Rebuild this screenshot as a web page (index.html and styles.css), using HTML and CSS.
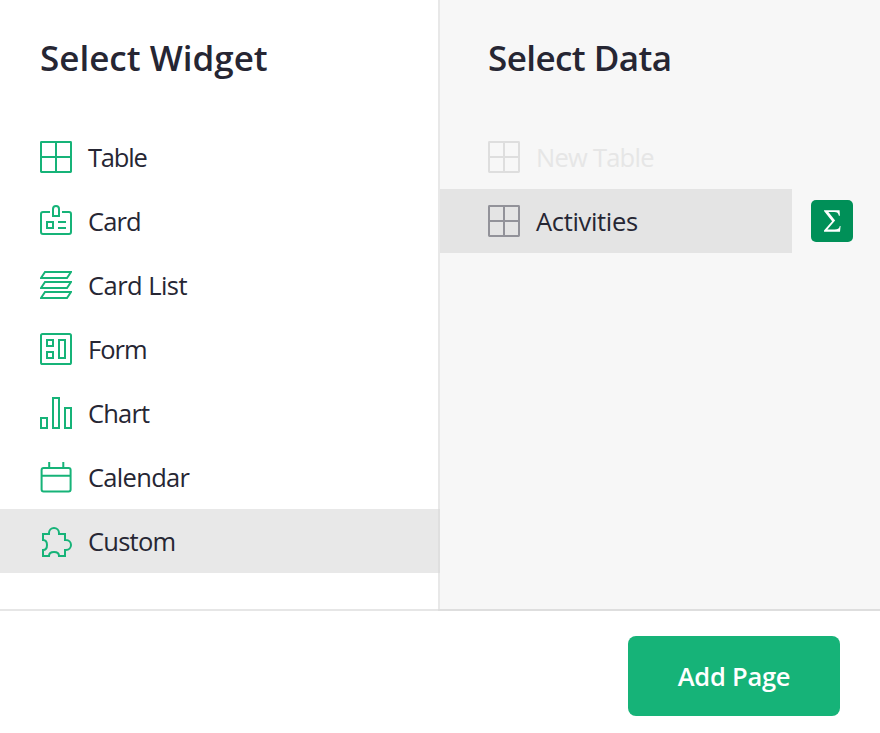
FILE: index.html
```
<!DOCTYPE html>
<html lang="en">
<head>
<meta charset="utf-8">
<title>Add Page</title>
<link rel="stylesheet" href="styles.css">
</head>
<body>
<svg class="defs" aria-hidden="true">
  <symbol id="table" viewBox="0 0 32 32"><rect x="1" y="1" width="30" height="30" rx=".4"/><path d="M16 1v30M1 16h30"/></symbol>
</svg>
<div class="dialog">
  <div class="panels">
    <section class="panel widgets">
      <h2>Select Widget</h2>
      <ul>
        <li><svg class="icon"><use href="#table"/></svg><span class="t-table">Table</span></li>
        <li><svg class="icon" viewBox="0 0 32 32"><path d="M10 7H3a2 2 0 0 0-2 2v18a2 2 0 0 0 2 2h26a2 2 0 0 0 2-2V9a2 2 0 0 0-2-2h-7M13 11V4a3 3 0 0 1 6 0v7zM7 17h6v6H7zM18 17h8M18 23h8"/></svg><span class="t-card">Card</span></li>
        <li><svg class="icon" viewBox="0 0 32 32"><path d="M5 3h26l-4 6H1zM5 13h26l-4 6H1zM5 23h26l-4 6H1z"/></svg><span class="t-list">Card List</span></li>
        <li><svg class="icon" viewBox="0 0 32 32"><rect x="1" y="1" width="30" height="30" rx="1.6"/><path d="M7 7h6v6H7zM7 19h6v6H7zM19 7h6v18h-6z"/></svg><span class="t-form">Form</span></li>
        <li><svg class="icon" viewBox="0 0 32 32"><path d="M1 21h6v10H1zM13 1h6v30h-6zM25 11h6v20h-6z"/></svg><span class="t-chart">Chart</span></li>
        <li><svg class="icon" viewBox="0 0 32 32"><rect x="1.6" y="7" width="29" height="23.6" rx="2"/><path d="M1.6 14.7h29M9.2 1v6M23.3 1v6"/></svg><span class="t-calendar">Calendar</span></li>
        <li class="selected"><svg class="icon" viewBox="0 0 32 32"><path d="M3 9h6V8a5 5 0 0 1 10 0v1h6v6h1a5 5 0 0 1 0 10h-1v6h-6c0-2.4-2-4-5-4s-5 1.600-5 4H3v-6c2.400 0 4-2 4-5s-1.600-5-4-5z"/></svg><span class="t-custom">Custom</span></li>
      </ul>
    </section>
    <section class="panel data">
      <h2>Select Data</h2>
      <ul>
        <li class="disabled"><svg class="icon"><use href="#table"/></svg><span class="t-new">New Table</span></li>
        <li class="selected"><svg class="icon"><use href="#table"/></svg><span class="t-act">Activities</span></li>
      </ul>
      <button class="sum" aria-label="Group by"><svg viewBox="0 0 42 42"><path d="M13 10.300h15.600l.3 5.500h-1c-.7-2.700-1.700-3.700-4.600-3.700H17.400l6.700 8.500-7.700 8.900h7.200c3.200 0 4.600-.7 5.200-3.400h.8l-.6 5.700H13v-1.200l8.100-9.400-8.100-10.100z"/></svg></button>
    </section>
  </div>
  <footer><button class="add">Add Page</button></footer>
</div>
</body>
</html>
```
FILE: styles.css
```
* { box-sizing: border-box; }
body { margin: 0; background: #fff; color: #262633; font-family: "Segoe UI", "Open Sans", sans-serif; }
.defs { position: absolute; width: 0; height: 0; }
.dialog { display: flex; flex-direction: column; width: 880px; height: 733px; }
.panels { display: grid; grid-template-columns: 440px 440px; height: 611px; box-shadow: inset 0 -2px 0 #e6e6e6; }
.panel { padding-top: 33px; }
.widgets { position: relative; }
.widgets::after { content: ""; position: absolute; inset: 0 0 0 auto; width: 2px; background: rgba(217, 217, 217, .6); }
.data { position: relative; background: #f7f7f7; box-shadow: inset 0 -2px 0 #dedede; }
h2 { margin: 0 0 42px; height: 50px; line-height: 50px; font-size: 35px; font-weight: 600; padding-left: 40px; white-space: nowrap; }
.data h2 { padding-left: 48px; letter-spacing: -.57px; }
ul { list-style: none; margin: 0; padding: 0; }
li { display: flex; gap: 16px; height: 64px; padding-left: 40px; font-size: 25.500px; line-height: 64px; white-space: nowrap; }
.icon { flex: none; width: 32px; height: 32px; margin-top: 16px; fill: none; stroke: #16b378; stroke-width: 2; }
.t-table { letter-spacing: -1.200px; }
.t-card { letter-spacing: -.9px; }
.t-list { letter-spacing: -.55px; }
.t-form { letter-spacing: -1px; }
.t-chart { letter-spacing: -.8px; }
.t-calendar { letter-spacing: -.7px; }
.t-custom { letter-spacing: -.75px; }
.t-new { letter-spacing: -.75px; }
.t-act { letter-spacing: -.33px; }
.selected { background: #e8e8e8; }
.data li { width: 352px; padding-left: 48px; }
.data .icon { stroke: #929299; }
.data .selected { background: #e4e4e4; }
.data .disabled { color: #e6e6e6; }
.data .disabled .icon { stroke: #dedede; }
.sum { position: absolute; left: 371px; top: 200px; width: 42px; height: 42px; padding: 0; border: 0; border-radius: 5px; background: #009058; }
.sum svg { display: block; width: 42px; height: 42px; fill: #fff; }
footer { display: flex; justify-content: flex-end; padding: 25px 40px 0 0; }
.add { width: 212px; height: 80px; padding: 0; border: 0; border-radius: 8px; background: #16b378; color: #fff; font: 600 25.500px/80px "Segoe UI", "Open Sans", sans-serif; letter-spacing: -.25px; }
```
